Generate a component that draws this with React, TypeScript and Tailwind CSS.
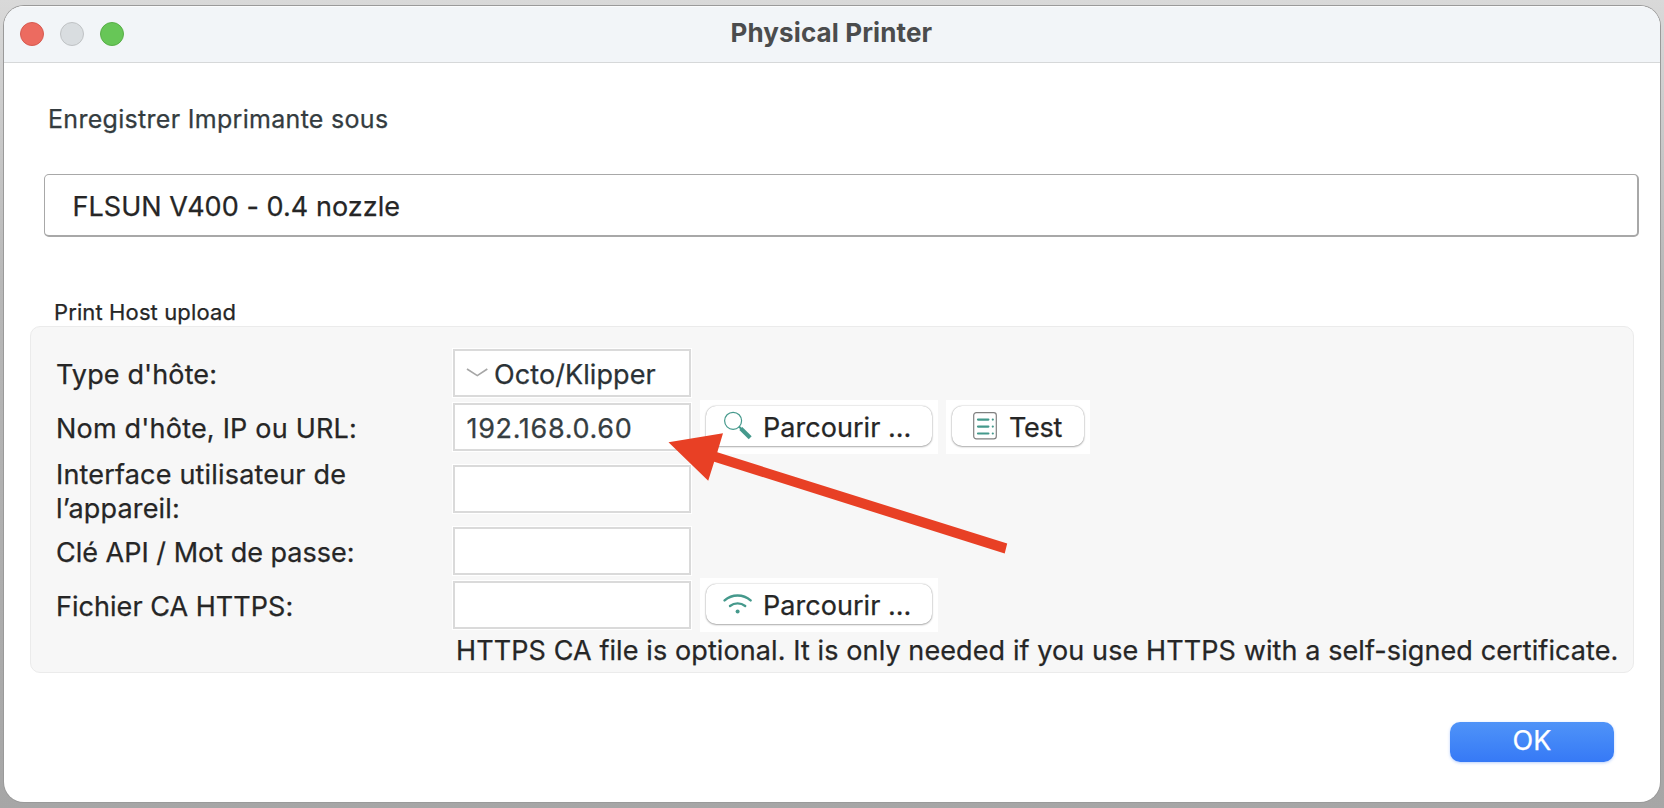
import type { ReactNode } from "react";

function SearchIcon() {
  return (
    <svg className="h-[30px] w-[30px] shrink-0" viewBox="0 0 30 30" fill="none">
      <circle cx="10.1" cy="9.8" r="8.5" stroke="#45998c" strokeWidth="1.2" />
      <path d="M15.8 15.5l3 2.8" stroke="#45998c" strokeWidth="2" />
      <path d="M17.8 17.6l9.4 9.1" stroke="#45998c" strokeWidth="4.2" />
    </svg>
  );
}

function ListIcon() {
  return (
    <svg className="h-[30px] w-[26px] shrink-0" viewBox="0 0 26 30" fill="none">
      <rect x="1.7" y="1.7" width="22.6" height="26.2" rx="2.6" stroke="#808080" strokeWidth="1.2" />
      <g stroke="#45998c" strokeWidth="2.2" strokeLinecap="round">
        <path d="M6 8.6h10.400M6 15.6h10.400M6 22.5h10.400" />
        <path d="M20.8 8.6h.01M20.8 15.6h.01M20.8 22.5h.01" />
      </g>
    </svg>
  );
}

function WifiIcon() {
  return (
    <svg className="h-[22px] w-[30px] shrink-0" viewBox="0 0 30 22" fill="none">
      <g stroke="#45998c" strokeWidth="2.4" strokeLinecap="round">
        <path d="M1.600 7.400a19.500 19.500 0 0 1 26 0" />
        <path d="M7 13a12.500 12.500 0 0 1 15.200 0" />
      </g>
      <circle cx="14.600" cy="18.500" r="2" fill="#45998c" />
    </svg>
  );
}

function Field({ children }: { children?: ReactNode }) {
  return (
    <div className="flex h-[48px] w-[238px] shrink-0 items-center border-2 border-[#dadada] bg-white pl-[11px] text-[#2b3236] outline outline-1 outline-white">
      {children}
    </div>
  );
}

function PushButton({ className, children }: { className: string; children: ReactNode }) {
  return (
    <div className="flex h-[54px] shrink-0 items-start bg-white px-[6px] pt-[6px]">
      <button
        className={`flex h-[40px] items-center rounded-[10px] bg-white shadow-[0_0_1.500px_rgba(0,0,0,0.35),0_1px_2px_rgba(0,0,0,0.28)] ${className}`}
      >
        {children}
      </button>
    </div>
  );
}

function Row({ height, label, children }: { height: string; label: ReactNode; children: ReactNode }) {
  return (
    <div className={`flex items-center ${height}`}>
      <div className="w-[397px] shrink-0 whitespace-nowrap">{label}</div>
      {children}
    </div>
  );
}

export default function App() {
  return (
    <div className="relative h-[808px] w-[1664px] overflow-hidden bg-linear-to-b from-[#d9d9d9] via-[#b8b8b8] via-35% to-[#a6a6a6] px-[4px] pt-[6px] font-['Inter','Liberation_Sans',sans-serif] text-[27px] leading-[34px] text-[#262626] [-webkit-text-stroke:0.25px_currentColor]">
      <div className="flex h-[796px] w-[1656px] flex-col overflow-hidden rounded-[20px] bg-white shadow-[0_0_0_1px_#9a9a9a]">
        <header className="flex h-[57px] shrink-0 items-center border-b border-[#d6d8d9] bg-[#f2f5f8] pl-[16px] shadow-[inset_0_1px_0_#fbfcfd]">
          <div className="flex w-[104px] shrink-0 gap-[16px]">
            <span className="h-[24px] w-[24px] shrink-0 rounded-full border border-[#d65a50] bg-[#ec6b60]" />
            <span className="h-[24px] w-[24px] shrink-0 rounded-full border border-[#bfc2c4] bg-[#d9dde0]" />
            <span className="h-[24px] w-[24px] shrink-0 rounded-full border border-[#58ae47] bg-[#67c657]" />
          </div>
          <h1 className="ml-[606.500px] pb-[2px] text-[26px] font-bold tracking-[0.113px] text-[#4b4c4d] [-webkit-text-stroke:0]">
            Physical Printer
          </h1>
        </header>

        <p className="mt-[39px] pl-[44px] text-[25px] tracking-[0.300px] text-[#343c40]">Enregistrer Imprimante sous</p>
        <div className="mt-[38px] ml-[40px] flex h-[63px] w-[1595px] shrink-0 items-center rounded-[5px] border border-r-2 border-b-2 border-[#a8a8a8] pt-[4px] pl-[27.500px] tracking-[0.050px]">
          FLSUN V400 - 0.4 nozzle
        </div>

        <section className="mt-[60px]">
          <h2 className="-mb-[2px] pl-[50px] text-[22px] leading-[31px] tracking-[0.120px]">Print Host upload</h2>
          <div className="ml-[26px] h-[347px] w-[1604px] rounded-[10px] border border-[#ebebeb] bg-[#f7f7f7] pt-[19px] pl-[25px]">
            <Row height="h-[54px]" label={<p className="pt-[4px] tracking-[0.120px]">Type d'hôte:</p>}>
              <Field>
                <svg className="h-[10px] w-[22px] shrink-0" viewBox="0 0 22 10" fill="none">
                  <path d="M1 1l10.300 6.600L21.300 1" stroke="#a6a6a6" strokeWidth="1.700" />
                </svg>
                <span className="ml-[6px] pt-[4px] tracking-[0.080px]">Octo/Klipper</span>
              </Field>
            </Row>
            <Row height="h-[54px]" label={<p className="pt-[4px] tracking-[0.200px]">Nom d'hôte, IP ou URL:</p>}>
              <Field>
                <span className="pt-[4px] pl-[0.500px] tracking-[0.680px] text-[#363e42]">192.168.0.60</span>
              </Field>
              <div className="ml-[9px] flex gap-[8px]">
                <PushButton className="w-[226px] pl-[17px]">
                  <SearchIcon />
                  <span className="ml-[10px] pt-[3px] tracking-[0.040px]">Parcourir ...</span>
                </PushButton>
                <PushButton className="w-[132px] pl-[20px]">
                  <ListIcon />
                  <span className="ml-[11px] pt-[3px] tracking-[-0.300px]">Test</span>
                </PushButton>
              </div>
            </Row>
            <Row
              height="h-[70px]"
              label={
                <p className="pt-[5px]">
                  <span className="tracking-[0.180px]">Interface utilisateur de</span>
                  <br />
                  <span className="tracking-[0.180px]">l’appareil:</span>
                </p>
              }
            >
              <Field />
            </Row>
            <Row height="h-[54px]" label={<p className="pt-[4px]">Clé API / Mot de passe:</p>}>
              <Field />
            </Row>
            <Row height="h-[54px]" label={<p className="pt-[4px] tracking-[0.040px]">Fichier CA HTTPS:</p>}>
              <Field />
              <div className="ml-[9px]">
                <PushButton className="w-[226px] pl-[17px]">
                  <WifiIcon />
                  <span className="ml-[10px] pt-[3px] tracking-[0.040px]">Parcourir ...</span>
                </PushButton>
              </div>
            </Row>
            <p className="mt-[2px] pl-[400px] tracking-[0.098px] whitespace-nowrap">
              HTTPS CA file is optional. It is only needed if you use HTTPS with a self-signed certificate.
            </p>
          </div>
        </section>

        <footer className="mt-[49px] flex justify-end pr-[46px]">
          <button className="flex h-[40px] w-[164px] items-start justify-center rounded-[10px] bg-linear-to-b from-[#4f93f8] to-[#3679f6] pt-[2px] text-white shadow-[0_1px_3px_rgba(54,121,246,0.35)]">
            OK
          </button>
        </footer>
      </div>

      <svg className="pointer-events-none absolute top-[430px] left-[660px] h-[130px] w-[360px]" viewBox="660 430 360 130">
        <path d="M668.500 442.300L723 433.300 717.300 452.300 1007.200 543.600 1004.700 553.400 714.200 461.800 708.200 480.700Z" fill="#e84025" />
      </svg>
    </div>
  );
}
